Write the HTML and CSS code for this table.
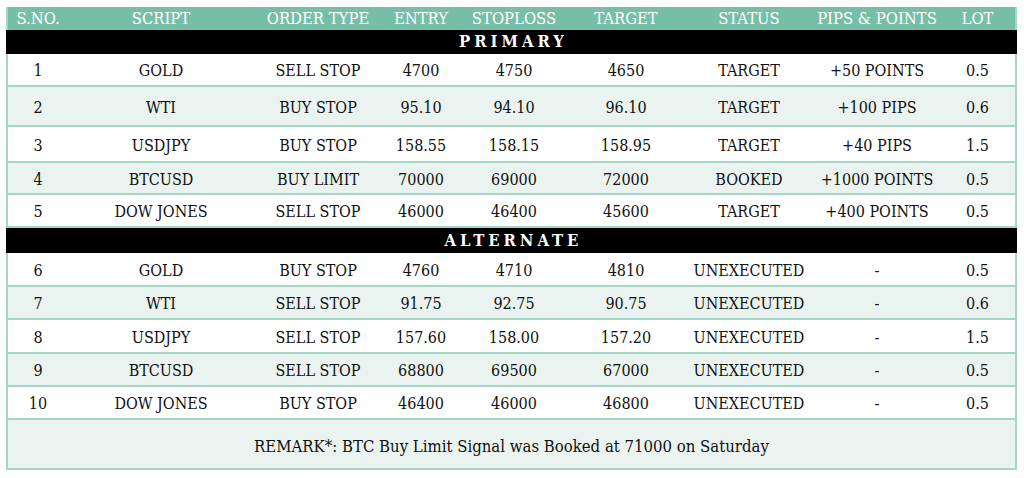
FILE: index.html
```html
<!DOCTYPE html>
<html>
<head>
<meta charset="utf-8">
<link rel="stylesheet" href="styles.css">
</head>
<body>
<div class="sheet">
  <div class="row head">
    <div>S.NO.</div><div>SCRIPT</div><div>ORDER TYPE</div><div>ENTRY</div><div>STOPLOSS</div><div>TARGET</div><div>STATUS</div><div>PIPS &amp; POINTS</div><div>LOT</div>
  </div>
  <div class="section">PRIMARY</div>
  <div class="row h33">
    <div>1</div><div>GOLD</div><div>SELL STOP</div><div>4700</div><div>4750</div><div>4650</div><div>TARGET</div><div>+50 POINTS</div><div>0.5</div>
  </div>
  <div class="row alt h40">
    <div>2</div><div>WTI</div><div>BUY STOP</div><div>95.10</div><div>94.10</div><div>96.10</div><div>TARGET</div><div>+100 PIPS</div><div>0.6</div>
  </div>
  <div class="row h36">
    <div>3</div><div>USDJPY</div><div>BUY STOP</div><div>158.55</div><div>158.15</div><div>158.95</div><div>TARGET</div><div>+40 PIPS</div><div>1.5</div>
  </div>
  <div class="row alt h32">
    <div>4</div><div>BTCUSD</div><div>BUY LIMIT</div><div>70000</div><div>69000</div><div>72000</div><div>BOOKED</div><div>+1000 POINTS</div><div>0.5</div>
  </div>
  <div class="row h33">
    <div>5</div><div>DOW JONES</div><div>SELL STOP</div><div>46000</div><div>46400</div><div>45600</div><div>TARGET</div><div>+400 POINTS</div><div>0.5</div>
  </div>
  <div class="section alt-section">ALTERNATE</div>
  <div class="row h34">
    <div>6</div><div>GOLD</div><div>BUY STOP</div><div>4760</div><div>4710</div><div>4810</div><div>UNEXECUTED</div><div>-</div><div>0.5</div>
  </div>
  <div class="row alt h33">
    <div>7</div><div>WTI</div><div>SELL STOP</div><div>91.75</div><div>92.75</div><div>90.75</div><div>UNEXECUTED</div><div>-</div><div>0.6</div>
  </div>
  <div class="row h34">
    <div>8</div><div>USDJPY</div><div>SELL STOP</div><div>157.60</div><div>158.00</div><div>157.20</div><div>UNEXECUTED</div><div>-</div><div>1.5</div>
  </div>
  <div class="row alt h33">
    <div>9</div><div>BTCUSD</div><div>SELL STOP</div><div>68800</div><div>69500</div><div>67000</div><div>UNEXECUTED</div><div>-</div><div>0.5</div>
  </div>
  <div class="row h33">
    <div>10</div><div>DOW JONES</div><div>BUY STOP</div><div>46400</div><div>46000</div><div>46800</div><div>UNEXECUTED</div><div>-</div><div>0.5</div>
  </div>
  <div class="remark">REMARK*: BTC Buy Limit Signal was Booked at 71000 on Saturday</div>
</div>
</body>
</html>
```

FILE: styles.css
```css
html, body {
  margin: 0;
  padding: 0;
  background: #ffffff;
}
body {
  font-family: "DejaVu Serif", "Liberation Serif", serif;
  font-stretch: condensed;
  color: #111111;
}
.sheet {
  margin: 7px 0 0 6px;
  width: 1011px;
  box-sizing: border-box;
  border-left: 2px solid #a4d8c6;
  border-right: 2px solid #a4d8c6;
}
.row {
  display: grid;
  grid-template-columns: 60px 186px 128px 78px 108px 116px 130px 126px 75px;
  align-items: center;
  justify-items: center;
  box-sizing: border-box;
  border-bottom: 2px solid #a4d8c6;
  font-size: 16px;
  padding-top: 2px;
  background: #ffffff;
}
.row.alt {
  background: #eaf3f0;
}
.row.head {
  height: 23px;
  padding-top: 0;
  background: #77bea8;
  color: #ffffff;
  font-size: 16.5px;
  border-bottom: none;
}
.section {
  height: 24px;
  background: #000000;
  color: #ffffff;
  font-weight: bold;
  font-size: 16.5px;
  letter-spacing: 4px;
  text-align: center;
  line-height: 24px;
  margin: 0 -2px;
  padding-left: 4px;
}
.section.alt-section {
  height: 25px;
  line-height: 25px;
}
.h32 { height: 32px; }
.h33 { height: 33px; }
.h34 { height: 34px; }
.h36 { height: 36px; }
.h40 { height: 40px; }
.remark {
  height: 50px;
  box-sizing: border-box;
  padding-top: 4px;
  background: #eaf3f0;
  border-bottom: 2px solid #a4d8c6;
  display: flex;
  align-items: center;
  justify-content: center;
  font-size: 16.6px;
}
```
